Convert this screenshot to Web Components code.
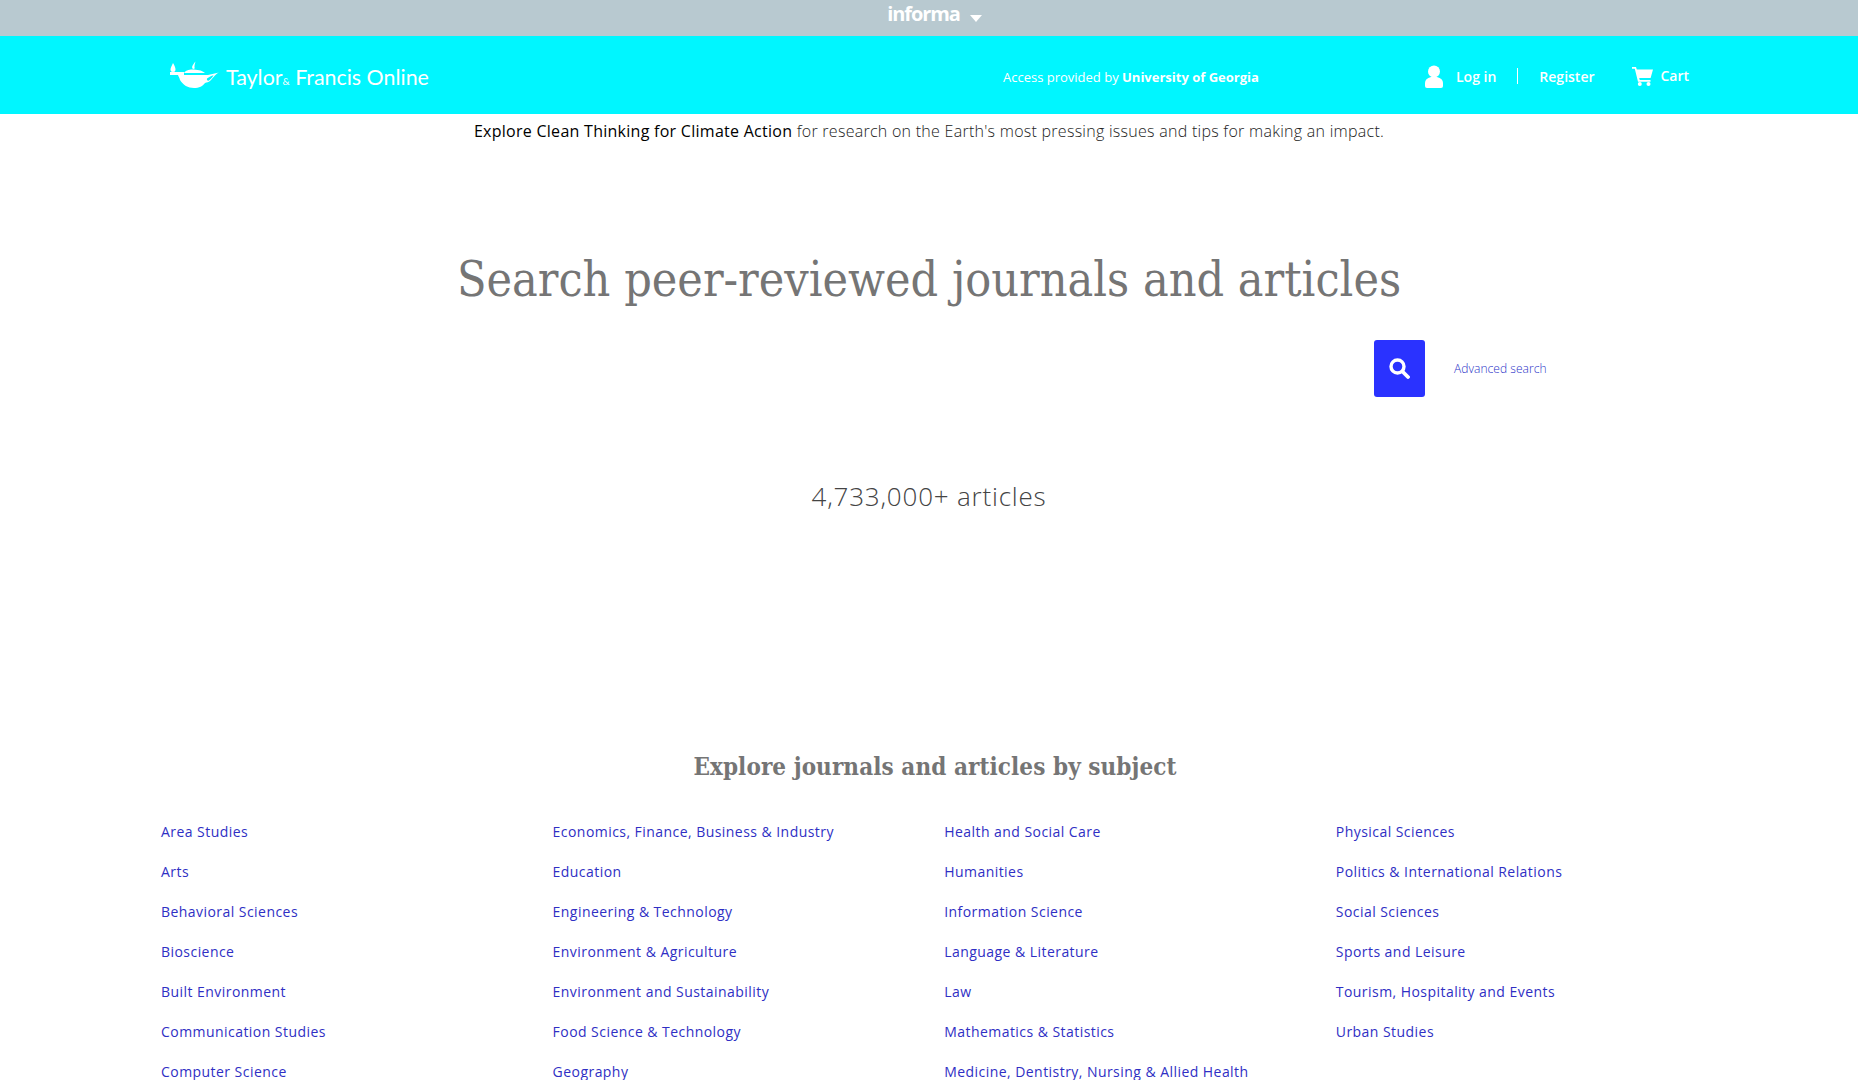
<!DOCTYPE html>
<html lang="en">
<head>
<meta charset="utf-8">
<title>Taylor & Francis Online</title>
<style>
  html, body { margin: 0; padding: 0; background: #fff; }
  body { font-family: "Open Sans", sans-serif; }
</style>
</head>
<body>
<tf-topbar></tf-topbar>
<tf-header></tf-header>
<tf-announce></tf-announce>
<tf-hero></tf-hero>
<tf-subjects></tf-subjects>

<script>
'use strict';

class TfTopbar extends HTMLElement {
  constructor() {
    super();
    this.shadow = this.attachShadow({ mode: 'open' });
    this.shadow.innerHTML = `
<style>
  :host { display: flex; justify-content: center; height: 36px; background: #b8c9d0; color: #fff; padding-left: 11px; box-sizing: border-box; }
  .brand { display: flex; align-items: flex-start; gap: 10px; }
  .name { font: 700 20px/27px "Open Sans", sans-serif; letter-spacing: -1.1px; }
  svg { margin-top: 15px; }
</style>
<div class="brand">
  <span class="name">informa</span>
  <svg width="12" height="7" viewBox="0 0 12 7"><path d="M0 0h12L6 7z" fill="#fff"/></svg>
</div>
`;
  }
}

class TfHeader extends HTMLElement {
  constructor() {
    super();
    this.shadow = this.attachShadow({ mode: 'open' });
    this.shadow.innerHTML = `
<style>
  :host { display: flex; align-items: center; height: 78px; background: #00f6ff; color: #fff; padding-left: 170px; box-sizing: border-box; font-family: "Open Sans", sans-serif; }
  .logo { display: flex; align-items: center; gap: 7px; width: 833px; }
  .logo-text { font: 400 21.4px Lato, "Open Sans", sans-serif; margin-top: 3px; }
  .logo-text small { font-size: 10px; }
  .access { font-size: 13px; width: 422px; margin-top: 3px; }
  .access b { font-weight: 700; }
  a { color: #fff; text-decoration: none; font-size: 14px; font-weight: 600; }
  .login { display: flex; align-items: center; gap: 13px; margin-top: 2px; }
  .sep { width: 1px; height: 16px; background: #fff; margin: 2px 21px 0; }
  .reg { margin-top: 2px; }
  .cart { display: flex; align-items: center; gap: 8px; margin-left: 37px; margin-top: 3px; }
  .cart a { margin-top: -3px; }
</style>
<div class="logo">
  <svg width="49" height="28" viewBox="0 0 49 28">
    <path fill="#fff" d="M3 2c1.500 2.500 2.500 4.500 2.500 6.500a2.500 2.500 0 0 1-5 0C.5 6.500 2 4.500 3 2zM0 11h14v3H0zM14 12c1-2 3-3 7-3.500h3c5 .3 9 1.500 11 3.500z"/>
    <path fill="#fff" d="M8 14h30l11-2.500c-3 1-5.500 5-9 8.500-1.500 1-3 1.500-5 2-2 3-6 5-11 5-6 0-11-3-14-8-.5-2-1.500-3.500-2-5z"/>
    <path fill="#00f6ff" d="M37 17.500c2-1.500 4.500-2.800 6.500-3.200-1 2-2.500 3.800-4.500 5.200-1 .7-2.500-.2-2-2z"/>
    <path fill="#fff" d="M23 8c-2-2 0-4.500 2.500-7.500-.4 2-1.500 4-.8 7z"/>
  </svg>
  <span class="logo-text">Taylor<small>&amp;</small> Francis Online</span>
</div>
<div class="access">Access provided by <b>University of Georgia</b></div>
<div class="login">
  <svg width="18" height="23" viewBox="0 0 18 23"><circle cx="9" cy="6.500" r="6" fill="#fff"/><path fill="#fff" d="M0 18c0-3 2-5 6-6h6c4 1 6 3 6 6v3a2 2 0 0 1-2 2H2a2 2 0 0 1-2-2z"/></svg>
  <a href="#">Log in</a>
</div>
<span class="sep"></span>
<a class="reg" href="#">Register</a>
<div class="cart">
  <svg width="21" height="19" viewBox="0 0 21 19"><path fill="#fff" d="M0 0h4l.8 2.500H21l-2.400 8.500H7.200l.5 2h10.800v1.800H6L2.800 1.800H0z"/><circle cx="7.800" cy="17" r="2" fill="#fff"/><circle cx="16.500" cy="17" r="2" fill="#fff"/></svg>
  <a href="#">Cart</a>
</div>
`;
  }
}

class TfAnnounce extends HTMLElement {
  constructor() {
    super();
    this.shadow = this.attachShadow({ mode: 'open' });
    this.shadow.innerHTML = `
<style>
  :host { display: block; text-align: center; font: 300 16px/34px "Open Sans", sans-serif; letter-spacing: .27px; color: #222; height: 34px; }
  a { color: #000; font-weight: 400; text-decoration: none; }
</style>
<a href="#">Explore Clean Thinking for Climate Action</a> for research on the Earth's most pressing issues and tips for making an impact.
`;
  }
}

class TfHero extends HTMLElement {
  constructor() {
    super();
    this.shadow = this.attachShadow({ mode: 'open' });
    this.shadow.innerHTML = `
<style>
  :host { display: block; padding-top: 101px; }
  h1 { margin: 0; text-align: center; font: 400 48px/60px "DejaVu Serif Condensed", "DejaVu Serif", serif; font-stretch: condensed; color: #757575; }
  .search { display: flex; align-items: center; margin: 31px 0 0 1374px; }
  button { width: 51px; height: 57px; border: 0; border-radius: 3px; background: #2a32ff; display: flex; align-items: center; justify-content: center; padding: 0; }
  a { margin-left: 29px; font: 300 12px "Open Sans", sans-serif; letter-spacing: .05px; color: #2a32c8; text-decoration: none; }
  .count { text-align: center; font: 300 26px/36px "Open Sans", sans-serif; letter-spacing: .8px; color: #444; margin-top: 81px; }
</style>
<h1>Search peer-reviewed journals and articles</h1>
<div class="search">
  <button aria-label="Search">
    <svg width="21" height="21" viewBox="0 0 21 21"><circle cx="8.500" cy="8.500" r="6.500" fill="none" stroke="#fff" stroke-width="3.400"/><path d="M13.500 13.500l5.500 5.500" stroke="#fff" stroke-width="3.800" stroke-linecap="round"/></svg>
  </button>
  <a href="#">Advanced search</a>
</div>
<div class="count">4,733,000+ articles</div>
`;
  }
}

class TfSubjects extends HTMLElement {
  constructor() {
    super();
    this.shadow = this.attachShadow({ mode: 'open' });
    this.shadow.innerHTML = `
<style>
  :host { display: block; padding-top: 237px; }
  h2 { margin: 0; text-align: center; font: 700 24px/32px "DejaVu Serif Condensed", "DejaVu Serif", serif; font-stretch: condensed; letter-spacing: .08px; color: #757575; padding-left: 12px; }
  .grid { display: grid; grid-template-columns: repeat(4, 391.6px); grid-auto-flow: column; grid-template-rows: repeat(7, 40px); margin: 29px 0 0 161px; }
  a { font: 400 14px/40px "Open Sans", sans-serif; letter-spacing: .45px; color: #2f2fc4; text-decoration: none; white-space: nowrap; }
</style>
<h2>Explore journals and articles by subject</h2>
<div class="grid"></div>
`;
    const subjects = [
      'Area Studies', 'Arts', 'Behavioral Sciences', 'Bioscience', 'Built Environment', 'Communication Studies', 'Computer Science',
      'Economics, Finance, Business & Industry', 'Education', 'Engineering & Technology', 'Environment & Agriculture', 'Environment and Sustainability', 'Food Science & Technology', 'Geography',
      'Health and Social Care', 'Humanities', 'Information Science', 'Language & Literature', 'Law', 'Mathematics & Statistics', 'Medicine, Dentistry, Nursing & Allied Health',
      'Physical Sciences', 'Politics & International Relations', 'Social Sciences', 'Sports and Leisure', 'Tourism, Hospitality and Events', 'Urban Studies'
    ];
    const grid = this.shadow.querySelector('.grid');
    subjects.forEach((s) => {
      const a = document.createElement('a');
      a.href = '#';
      a.textContent = s;
      grid.appendChild(a);
    });
  }
}

customElements.define('tf-topbar', TfTopbar);
customElements.define('tf-header', TfHeader);
customElements.define('tf-announce', TfAnnounce);
customElements.define('tf-hero', TfHero);
customElements.define('tf-subjects', TfSubjects);
</script>
</body>
</html>
